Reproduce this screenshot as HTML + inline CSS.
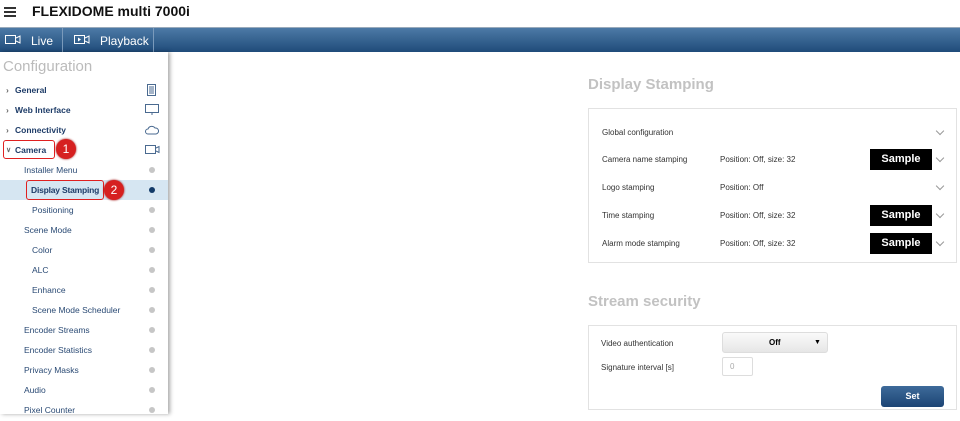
<!DOCTYPE html>
<html><head><meta charset="utf-8"><style>
*{margin:0;padding:0;box-sizing:border-box}
body{width:960px;height:414px;overflow:hidden;background:#fff;font-family:"Liberation Sans",Arial,sans-serif;position:relative}
.abs{position:absolute}
.hdr{left:0;top:0;width:960px;height:27px;background:#fff}
.nav{left:0;top:27px;width:960px;height:25px;background:linear-gradient(#4d7aa6,#1f4b7a);border-top:1px solid #9ab}
.nav .t{color:#fff;font-size:12px;top:6px}
.side{left:0;top:52px;width:168px;height:362px;background:#fff;box-shadow:2px 0 4px rgba(0,0,0,.35)}
.it{position:absolute;font-size:8.5px;color:#2a4a74;left:0;width:168px;height:20px;line-height:21px}
.b{font-weight:bold;color:#1e3c68}
.dot{position:absolute;left:149px;top:7px;width:6px;height:6px;border-radius:50%;background:#c6c6c6}
.ttl{font-size:15px;font-weight:bold;color:#c2c2c2}
.box{border:1px solid #e2e2e2;background:#fff}
.lbl{font-size:8px;color:#333}
.smp{width:62px;height:21px;background:#000;color:#fff;font-weight:bold;font-size:11px;text-align:center;line-height:21px}
.chev{width:6px;height:6px;border-right:1px solid #999;border-bottom:1px solid #999;transform:rotate(45deg)}
.red{border:1.5px solid #e02020;border-radius:3px}
.circ{width:20px;height:20px;border-radius:50%;background:#d62020;color:#fff;font-size:12px;text-align:center;line-height:20px;box-shadow:0 0 2px #900}
</style></head><body>
<div class="abs hdr">
 <div class="abs" style="left:4px;top:7px;width:12px;height:2px;background:#333"></div>
 <div class="abs" style="left:4px;top:11px;width:12px;height:2px;background:#333"></div>
 <div class="abs" style="left:4px;top:15px;width:12px;height:2px;background:#333"></div>
 <div class="abs" style="left:32px;top:3px;font-size:14px;font-weight:bold;color:#111">FLEXIDOME multi 7000i</div>
</div>
<div class="abs nav">
 <svg class="abs" style="left:5px;top:7px" width="16" height="10"><rect x="0.5" y="0.5" width="10" height="8" fill="none" stroke="#fff"/><path d="M11 3 L15 1 V8 L11 6" fill="none" stroke="#fff"/></svg>
 <div class="abs t" style="left:31px">Live</div>
 <div class="abs" style="left:62px;top:0;width:1px;height:25px;background:#7a9abb"></div>
 <svg class="abs" style="left:74px;top:7px" width="16" height="10"><rect x="0.5" y="0.5" width="10" height="8" fill="none" stroke="#fff"/><path d="M4 2.5 L7 4.5 L4 6.5Z" fill="#fff"/><path d="M11 3 L15 1 V8 L11 6" fill="none" stroke="#fff"/></svg>
 <div class="abs t" style="left:100px">Playback</div>
 <div class="abs" style="left:153px;top:0;width:1px;height:25px;background:#7a9abb"></div>
</div>
<div class="abs side">
 <div class="abs" style="left:3px;top:6px;font-size:15px;color:#bbb">Configuration</div>
 <div class="it b" style="top:28px"><span style="position:absolute;left:6px;color:#666">›</span><span style="position:absolute;left:15px">General</span>
  <svg class="abs" style="left:147px;top:4px" width="9" height="12"><rect x=".5" y=".5" width="8" height="11" fill="none" stroke="#4a6a90"/><path d="M2 3H7M2 5H7M2 7H7M2 9H7" stroke="#4a6a90"/></svg></div>
 <div class="it b" style="top:48px"><span style="position:absolute;left:6px;color:#666">›</span><span style="position:absolute;left:15px">Web Interface</span>
  <svg class="abs" style="left:145px;top:4px" width="14" height="12"><rect x=".5" y=".5" width="13" height="8" fill="none" stroke="#4a6a90"/><path d="M6 10H8" stroke="#4a6a90"/></svg></div>
 <div class="it b" style="top:68px"><span style="position:absolute;left:6px;color:#666">›</span><span style="position:absolute;left:15px">Connectivity</span>
  <svg class="abs" style="left:145px;top:5px" width="14" height="10"><path d="M3 9 A2.5 2.5 0 0 1 3 4 A4 4 0 0 1 10 3 A3 3 0 0 1 11 9Z" fill="none" stroke="#4a6a90"/></svg></div>
 <div class="it b" style="top:88px"><span style="position:absolute;left:6px;color:#666;font-size:7px">∨</span><span style="position:absolute;left:15px">Camera</span>
  <svg class="abs" style="left:145px;top:5px" width="15" height="10"><rect x=".5" y=".5" width="10" height="8" fill="none" stroke="#4a6a90"/><path d="M11 3 L14 1.5 V7.5 L11 6" fill="none" stroke="#4a6a90"/></svg></div>
 <div class="it" style="top:108px"><span style="position:absolute;left:24px">Installer Menu</span><div class="dot"></div></div>
 <div class="it b" style="top:128px;background:#d6e6f2"><span style="position:absolute;left:31px;letter-spacing:-0.2px">Display Stamping</span><div class="dot" style="background:#123a68"></div></div>
 <div class="it" style="top:148px"><span style="position:absolute;left:32px">Positioning</span><div class="dot"></div></div>
 <div class="it" style="top:168px"><span style="position:absolute;left:24px">Scene Mode</span><div class="dot"></div></div>
 <div class="it" style="top:188px"><span style="position:absolute;left:32px">Color</span><div class="dot"></div></div>
 <div class="it" style="top:208px"><span style="position:absolute;left:32px">ALC</span><div class="dot"></div></div>
 <div class="it" style="top:228px"><span style="position:absolute;left:32px">Enhance</span><div class="dot"></div></div>
 <div class="it" style="top:248px"><span style="position:absolute;left:32px">Scene Mode Scheduler</span><div class="dot"></div></div>
 <div class="it" style="top:268px"><span style="position:absolute;left:24px">Encoder Streams</span><div class="dot"></div></div>
 <div class="it" style="top:288px"><span style="position:absolute;left:24px">Encoder Statistics</span><div class="dot"></div></div>
 <div class="it" style="top:308px"><span style="position:absolute;left:24px">Privacy Masks</span><div class="dot"></div></div>
 <div class="it" style="top:328px"><span style="position:absolute;left:24px">Audio</span><div class="dot"></div></div>
 <div class="it" style="top:348px"><span style="position:absolute;left:24px">Pixel Counter</span><div class="dot"></div></div>
</div>
<div class="abs red" style="left:3px;top:140px;width:52px;height:19px"></div>
<div class="abs circ" style="left:56px;top:139px">1</div>
<div class="abs red" style="left:26px;top:180px;width:78px;height:20px"></div>
<div class="abs circ" style="left:104px;top:180px">2</div>

<div class="abs ttl" style="left:588px;top:76px">Display Stamping</div>
<div class="abs box" style="left:588px;top:108px;width:369px;height:155px">
 <div class="abs lbl" style="left:13px;top:19px">Global configuration</div>
 <div class="abs lbl" style="left:13px;top:46px">Camera name stamping</div>
 <div class="abs lbl" style="left:131px;top:46px">Position: Off, size: 32</div>
 <div class="abs lbl" style="left:13px;top:74px">Logo stamping</div>
 <div class="abs lbl" style="left:131px;top:74px">Position: Off</div>
 <div class="abs lbl" style="left:13px;top:102px">Time stamping</div>
 <div class="abs lbl" style="left:131px;top:102px">Position: Off, size: 32</div>
 <div class="abs lbl" style="left:13px;top:130px">Alarm mode stamping</div>
 <div class="abs lbl" style="left:131px;top:130px">Position: Off, size: 32</div>
 <div class="abs smp" style="left:281px;top:40px">Sample</div>
 <div class="abs smp" style="left:281px;top:96px">Sample</div>
 <div class="abs smp" style="left:281px;top:124px">Sample</div>
 <div class="abs chev" style="left:348px;top:19px"></div>
 <div class="abs chev" style="left:348px;top:46px"></div>
 <div class="abs chev" style="left:348px;top:74px"></div>
 <div class="abs chev" style="left:348px;top:102px"></div>
 <div class="abs chev" style="left:348px;top:130px"></div>
</div>
<div class="abs ttl" style="left:588px;top:293px">Stream security</div>
<div class="abs box" style="left:588px;top:325px;width:369px;height:85px">
 <div class="abs lbl" style="left:12px;top:13px">Video authentication</div>
 <div class="abs" style="left:133px;top:6px;width:106px;height:21px;border:1px solid #ddd;border-radius:3px;background:linear-gradient(#fafafa,#e6e6e6);font-size:8px;font-weight:bold;line-height:19px"><span style="position:absolute;left:46px">Off</span><span style="position:absolute;left:91px;font-size:7px">▼</span></div>
 <div class="abs lbl" style="left:12px;top:37px">Signature interval [s]</div>
 <div class="abs" style="left:133px;top:31px;width:31px;height:19px;border:1px solid #ddd;border-radius:2px;font-size:8px;color:#aaa;line-height:17px;padding-left:7px">0</div>
 <div class="abs" style="left:292px;top:60px;width:63px;height:21px;border-radius:3px;background:linear-gradient(#3e6b9a,#1c4474);color:#fff;font-size:9px;font-weight:bold;text-align:center;line-height:21px">Set</div>
</div>
</body></html>
